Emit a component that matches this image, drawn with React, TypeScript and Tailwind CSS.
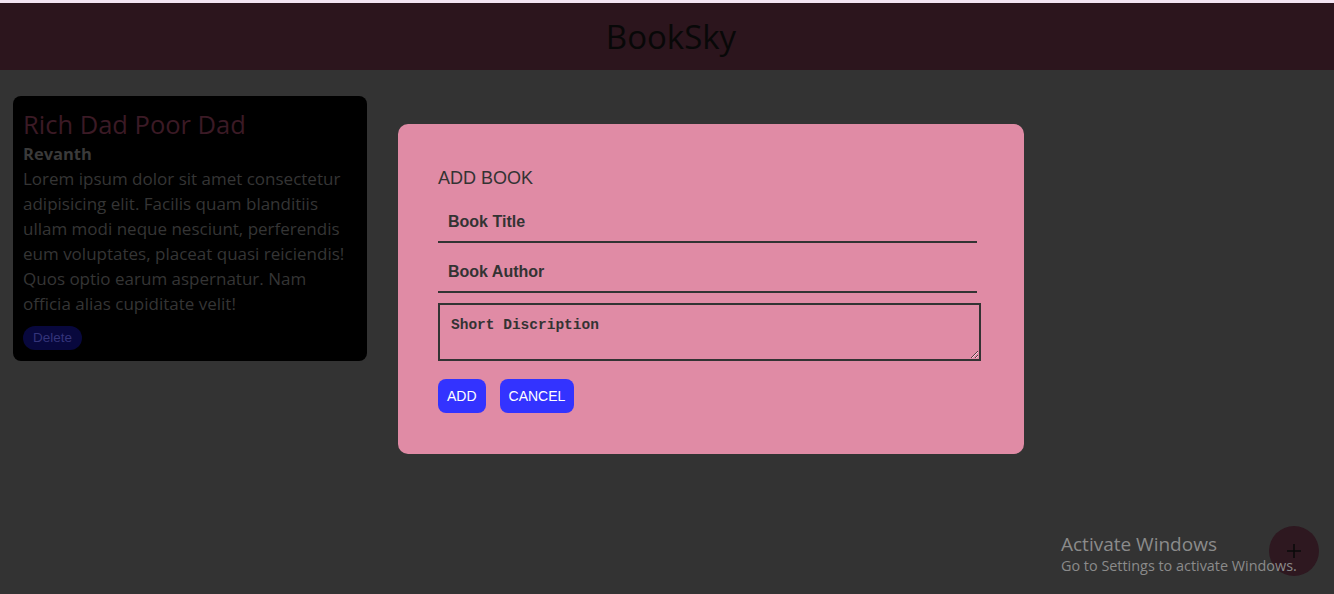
import { useState } from "react";

/** BookSky — lista de libros con el modal "Add Book" abierto */
export default function App() {
  const [title, setTitle] = useState("");
  const [author, setAuthor] = useState("");
  const [desc, setDesc] = useState("");

  return (
    <div className="relative h-[594px] w-[1334px] overflow-hidden bg-[#333333]">
      {/* ── Encabezado ─────────────────────────────────────────── */}
      <div className="h-[3px] bg-[#f3e4f2]" />
      <header className="flex h-[67px] items-center justify-center bg-[#2c151d] pl-2">
        <h1 className="text-[33px] font-medium text-[#080808] [font-family:'Open_Sans',sans-serif]">BookSky</h1>
      </header>

      {/* ── Tarjetas ───────────────────────────────────────────── */}
      <main className="flex flex-wrap gap-4 px-[13px] pt-[26px]">
        <div className="w-[354px] rounded-lg bg-black px-[10px] pt-[10px] pb-[11px] [font-family:'Open_Sans',sans-serif]">
          <h2 className="text-[25.5px] leading-[36px] font-medium text-[#3b1a25]">Rich Dad Poor Dad</h2>
          <p className="text-[16.5px] leading-[24px] font-bold text-[#3a3a3a]">Revanth</p>
          <p className="text-[17px] leading-[25px] text-[#353535]">
            Lorem ipsum dolor sit amet consectetur adipisicing elit. Facilis quam blanditiis ullam modi
            neque nesciunt, perferendis eum voluptates, placeat quasi reiciendis! Quos optio earum
            aspernatur. Nam officia alias cupiditate velit!
          </p>
          <button className="mt-[10px] h-6 rounded-full bg-[#08083d] px-[10px] text-[13.5px] text-[#34347a] [font-family:'Liberation_Sans',sans-serif]">
            Delete
          </button>
        </div>
      </main>

      {/* ── Modal ──────────────────────────────────────────────── */}
      <div className="absolute top-[124px] left-[398px] h-[330px] w-[626px] rounded-[10px] bg-[#e08ba5] px-10 pt-[44px] [font-family:'Liberation_Sans',sans-serif]">
        <h3 className="text-[18px] leading-[21px] text-[#333333]">ADD BOOK</h3>
        <div className="mt-[14px] flex flex-col gap-[10px]">
          <input
            value={title}
            onChange={(e) => setTitle(e.target.value)}
            placeholder="Book Title"
            className="h-10 w-[539px] border-b-2 border-[#333333] bg-transparent px-[10px] text-[16px] font-bold text-[#333333] outline-none placeholder:text-[#333333]"
          />
          <input
            value={author}
            onChange={(e) => setAuthor(e.target.value)}
            placeholder="Book Author"
            className="h-10 w-[539px] border-b-2 border-[#333333] bg-transparent px-[10px] text-[16px] font-bold text-[#333333] outline-none placeholder:text-[#333333]"
          />
        </div>
        <textarea
          value={desc}
          onChange={(e) => setDesc(e.target.value)}
          placeholder="Short Discription"
          className="mt-[10px] block h-[58px] w-[543px] border-2 border-[#333333] bg-transparent px-[11px] pt-[12px] text-[14.5px] leading-[17px] font-bold text-[#333333] outline-none placeholder:text-[#333333] [font-family:'Liberation_Mono',monospace]"
        />
        <div className="mt-[18px] flex gap-[14px]">
          <button className="h-[34px] rounded-lg bg-[#3333ff] px-[9px] text-[14px] text-white">ADD</button>
          <button className="h-[34px] rounded-lg bg-[#3333ff] px-[9px] text-[14px] text-white">CANCEL</button>
        </div>
      </div>

      {/* ── Botón flotante ─────────────────────────────────────── */}
      <button className="absolute top-[526px] left-[1269px] flex h-[50px] w-[50px] items-center justify-center rounded-full bg-[#2e1820]">
        <svg width="16" height="16" viewBox="0 0 16 16" fill="none" stroke="#0a0a0a" strokeWidth="1.6">
          <path d="M8 1v14M1 8h14" />
        </svg>
      </button>

      {/* ── Marca de agua ──────────────────────────────────────── */}
      <div className="pointer-events-none absolute top-[532px] left-[1061px] text-[#8b8b8b] [font-family:'Open_Sans',sans-serif]">
        <p className="text-[19px] leading-[24px]">Activate Windows</p>
        <p className="text-[14.4px] leading-[19px]">Go to Settings to activate Windows.</p>
      </div>
    </div>
  );
}
